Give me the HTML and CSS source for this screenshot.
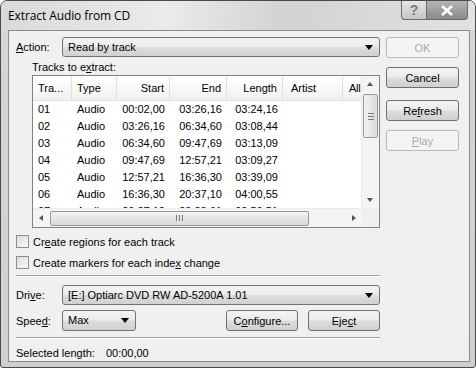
FILE: index.html
```html
<!DOCTYPE html>
<html lang="en">
  <head>
    <meta charset="UTF-8" />
    <title>Extract Audio from CD</title>
    <link rel="stylesheet" href="styles.css">
  </head>

  <body>
    <div class="window">
      <div class="titlebar">
        <span class="title">Extract Audio from CD</span>
        <div class="caption-buttons">
          <span class="cap help">?</span>
          <span class="cap close">
            <svg width="14" height="11" viewBox="0 0 14 11">
              <path d="M2 1 L12 10 M12 1 L2 10" stroke="#fff" stroke-width="2.6" />
            </svg>
          </span>
        </div>
      </div>

      <div class="client">
        <div class="main">
          <div class="field-row">
            <span class="label"><u>A</u>ction:</span>
            <div class="combo wide">Read by track<span class="arrow"></span></div>
          </div>

          <div class="tracks-label">Tracks to e<u>x</u>tract:</div>

          <div class="list">
            <div class="list-body">
              <div class="grid">
                <div class="head">
                  <span class="c1">Tra...</span>
                  <span class="c2">Type</span>
                  <span class="c3 num">Start</span>
                  <span class="c4 num">End</span>
                  <span class="c5 num">Length</span>
                  <span class="c6">Artist</span>
                  <span class="c7">All</span>
                </div>
                <div class="rows" id="rows"></div>
              </div>
              <div class="vscroll">
                <span class="sarrow up"></span>
                <span class="vthumb"><i></i><i></i><i></i></span>
                <span class="sarrow down"></span>
              </div>
            </div>
            <div class="hscroll">
              <span class="sarrow left"></span>
              <span class="hthumb"><i></i><i></i><i></i></span>
              <span class="sarrow right"></span>
              <span class="corner"></span>
            </div>
          </div>

          <label class="check"><span class="box"></span><span>Cr<u>e</u>ate regions for each track</span></label>
          <label class="check"><span class="box"></span><span>Create markers for each inde<u>x</u> change</span></label>

          <div class="sep first"></div>

          <div class="field-row drive">
            <span class="label">Dri<u>v</u>e:</span>
            <div class="combo wide">[E:] Optiarc DVD RW AD-5200A 1.01<span class="arrow"></span></div>
          </div>
          <div class="field-row speed">
            <span class="label">Spee<u>d</u>:</span>
            <div class="combo small">Max<span class="arrow"></span></div>
            <button class="btn configure">C<u>o</u>nfigure...</button>
            <button class="btn eject">Eje<u>c</u>t</button>
          </div>

          <div class="sep second"></div>

          <div class="status">
            <span>Selected length:</span>
            <span class="status-val">00:00,00</span>
          </div>
        </div>

        <div class="side">
          <button class="btn disabled ok">OK</button>
          <button class="btn cancel">Cancel</button>
          <button class="btn refresh">Re<u>f</u>resh</button>
          <button class="btn disabled play"><u>P</u>lay</button>
        </div>
      </div>
    </div>

    <script>
      const tracks = [
        ["01", "Audio", "00:02,00", "03:26,16", "03:24,16"],
        ["02", "Audio", "03:26,16", "06:34,60", "03:08,44"],
        ["03", "Audio", "06:34,60", "09:47,69", "03:13,09"],
        ["04", "Audio", "09:47,69", "12:57,21", "03:09,27"],
        ["05", "Audio", "12:57,21", "16:36,30", "03:39,09"],
        ["06", "Audio", "16:36,30", "20:37,10", "04:00,55"],
        ["07", "Audio", "20:37,10", "23:33,61", "02:56,51"],
      ];

      const rows = document.getElementById("rows");
      tracks.forEach(function (t) {
        const row = document.createElement("div");
        row.className = "row";
        row.innerHTML =
          '<span class="c1">' + t[0] + "</span>" +
          '<span class="c2">' + t[1] + "</span>" +
          '<span class="c3 num">' + t[2] + "</span>" +
          '<span class="c4 num">' + t[3] + "</span>" +
          '<span class="c5 num">' + t[4] + "</span>" +
          '<span class="c6"></span><span class="c7"></span>';
        rows.appendChild(row);
      });
    </script>
  </body>
</html>
```

FILE: styles.css
```css
body {
  margin: 0;
  background-color: #fff;
  font-family: "Liberation Sans", Arial, sans-serif;
  font-size: 11px;
  color: #000;
}

.window {
  width: 476px;
  height: 368px;
  box-sizing: border-box;
  border: 1px solid #4a4a4a;
  border-radius: 7px 7px 3px 3px;
  background: linear-gradient(180deg, #e4e4e4 0%, #d6d6d6 10%, #cfcfcf 100%);
  display: flex;
  flex-direction: column;
  overflow: hidden;
}

.titlebar {
  height: 29px;
  display: flex;
  align-items: flex-start;
  justify-content: space-between;
  background: linear-gradient(100deg, #d9d9d9 0%, #ebebeb 35%, #d2d2d2 60%, #e2e2e2 100%);
}

.title {
  font-family: "Open Sans", "Liberation Sans", sans-serif;
  font-size: 12px;
  margin: 6px 0 0 7px;
  letter-spacing: -0.1px;
}

.caption-buttons {
  display: flex;
  margin-right: 7px;
}

.cap {
  height: 18px;
  border: 1px solid #6a6a6a;
  border-top: none;
  display: flex;
  align-items: center;
  justify-content: center;
}

.help {
  width: 24px;
  border-radius: 0 0 0 4px;
  background: linear-gradient(180deg, #e6e6e6, #c4c4c4);
  color: #7a7a7a;
  font-size: 14px;
  font-weight: bold;
}

.close {
  width: 40px;
  border-left: none;
  border-radius: 0 0 4px 0;
  background: linear-gradient(180deg, #b5b5b5, #8a8a8a);
}

.client {
  flex: 1;
  margin: 0 5px 5px 7px;
  border: 1px solid #8c8c8c;
  background-color: #f0f0f0;
  display: flex;
  gap: 6px;
  padding: 6px 0 0 7px;
}

.main {
  width: 364px;
  display: flex;
  flex-direction: column;
}

.field-row {
  display: flex;
  align-items: center;
}

.label {
  width: 46px;
}

.combo {
  position: relative;
  box-sizing: border-box;
  height: 20px;
  border: 1px solid #727272;
  border-radius: 3px;
  background: linear-gradient(180deg, #f4f4f4 0%, #ebebeb 48%, #dddddd 52%, #d0d0d0 100%);
  padding: 3px 0 0 5px;
}

.combo.wide {
  width: 318px;
}

.combo.small {
  width: 74px;
  height: 21px;
}

.arrow {
  position: absolute;
  right: 6px;
  top: 7px;
  border-left: 4px solid transparent;
  border-right: 4px solid transparent;
  border-top: 5px solid #000;
}

.tracks-label {
  margin: 4px 0 0 16px;
  height: 14px;
}

.list {
  margin-left: 16px;
  width: 348px;
  height: 153px;
  box-sizing: border-box;
  border: 1px solid #828282;
  background-color: #fff;
  display: flex;
  flex-direction: column;
}

.list-body {
  flex: 1;
  display: flex;
  overflow: hidden;
}

.grid {
  flex: 1;
  overflow: hidden;
}

.head,
.row {
  display: flex;
  white-space: nowrap;
}

.head {
  height: 24px;
  align-items: center;
  background: linear-gradient(180deg, #fff 0%, #f7f7f7 60%, #f0f0f0 100%);
  border-bottom: 1px solid #e3e3e3;
}

.head span {
  height: 24px;
  line-height: 24px;
  border-right: 1px solid #e0e0e0;
}

.row {
  height: 17px;
  line-height: 17px;
}

.c1,
.c2,
.c3,
.c4,
.c5,
.c6,
.c7 {
  display: block;
  flex: none;
  box-sizing: border-box;
  padding: 0 5px 0 5px;
}

.num {
  text-align: right;
}

.c1 { width: 39px; }
.c2 { width: 45px; }
.c3 { width: 53px; }
.c4 { width: 57px; }
.c5 { width: 56px; }
.c6 { width: 60px; padding-left: 8px; }
.c7 { width: 40px; padding-left: 6px; letter-spacing: -0.3px; }

.vscroll {
  width: 17px;
  display: flex;
  flex-direction: column;
  background-color: #f4f4f4;
  border-left: 1px solid #ececec;
}

.sarrow {
  position: relative;
  flex: none;
  width: 17px;
  height: 17px;
}

.sarrow::after {
  content: "";
  position: absolute;
  left: 5px;
  top: 6px;
  border: 3px solid transparent;
}

.sarrow.up::after {
  border-bottom: 4px solid #555;
  top: 3px;
}

.sarrow.down::after {
  border-top: 4px solid #555;
  top: 7px;
}

.sarrow.left::after {
  border-right: 4px solid #555;
  left: 3px;
  top: 5px;
}

.sarrow.right::after {
  border-left: 4px solid #555;
  left: 7px;
  top: 5px;
}

.vthumb {
  margin: 1px 1px 0 1px;
  height: 44px;
  box-sizing: border-box;
  border: 1px solid #9a9a9a;
  border-radius: 2px;
  background: linear-gradient(90deg, #f2f2f2, #dadada);
  display: flex;
  flex-direction: column;
  justify-content: center;
  align-items: center;
  gap: 2px;
}

.vthumb i {
  width: 6px;
  height: 1px;
  background-color: #777;
}

.vscroll .down {
  margin-top: auto;
}

.hscroll {
  height: 18px;
  display: flex;
  align-items: center;
  background-color: #f4f4f4;
  border-top: 1px solid #ececec;
}

.hthumb {
  width: 259px;
  height: 15px;
  box-sizing: border-box;
  border: 1px solid #9a9a9a;
  border-radius: 2px;
  background: linear-gradient(180deg, #f2f2f2, #d8d8d8);
  display: flex;
  justify-content: center;
  align-items: center;
  gap: 2px;
}

.hthumb i {
  width: 1px;
  height: 6px;
  background-color: #777;
}

.hscroll .right {
  margin-left: auto;
}

.corner {
  width: 17px;
  height: 18px;
  background-color: #f0f0f0;
}

.check {
  display: flex;
  align-items: center;
  height: 21px;
}

.check:first-of-type {
  margin-top: 3px;
}

.box {
  width: 11px;
  height: 11px;
  border: 1px solid #8e8e8e;
  background: linear-gradient(135deg, #dcdcdc, #f8f8f8);
  margin-right: 4px;
}

.sep {
  height: 1px;
  background-color: #a0a0a0;
  border-bottom: 1px solid #fff;
}

.sep.first {
  margin-top: 2px;
}

.drive {
  margin-top: 8px;
}

.speed {
  margin-top: 5px;
}

.btn {
  box-sizing: border-box;
  height: 21px;
  border: 1px solid #707070;
  border-radius: 3px;
  background: linear-gradient(180deg, #f3f3f3 0%, #ebebeb 48%, #dddddd 52%, #cfcfcf 100%);
  font-family: "Liberation Sans", Arial, sans-serif;
  font-size: 11px;
  color: #000;
  padding: 0;
}

.configure {
  width: 72px;
  margin-left: 90px;
}

.eject {
  width: 72px;
  margin-left: 10px;
}

.sep.second {
  margin-top: 6px;
}

.status {
  margin-top: 8px;
  display: flex;
}

.status-val {
  margin-left: 11px;
}

.side {
  width: 73px;
  display: flex;
  flex-direction: column;
}

.btn.disabled {
  border-color: #b8b8b8;
  background: #f4f4f4;
  color: #a8a8a8;
}

.cancel {
  margin-top: 9px;
}

.refresh {
  margin-top: 12px;
}

.play {
  margin-top: 9px;
}
```
